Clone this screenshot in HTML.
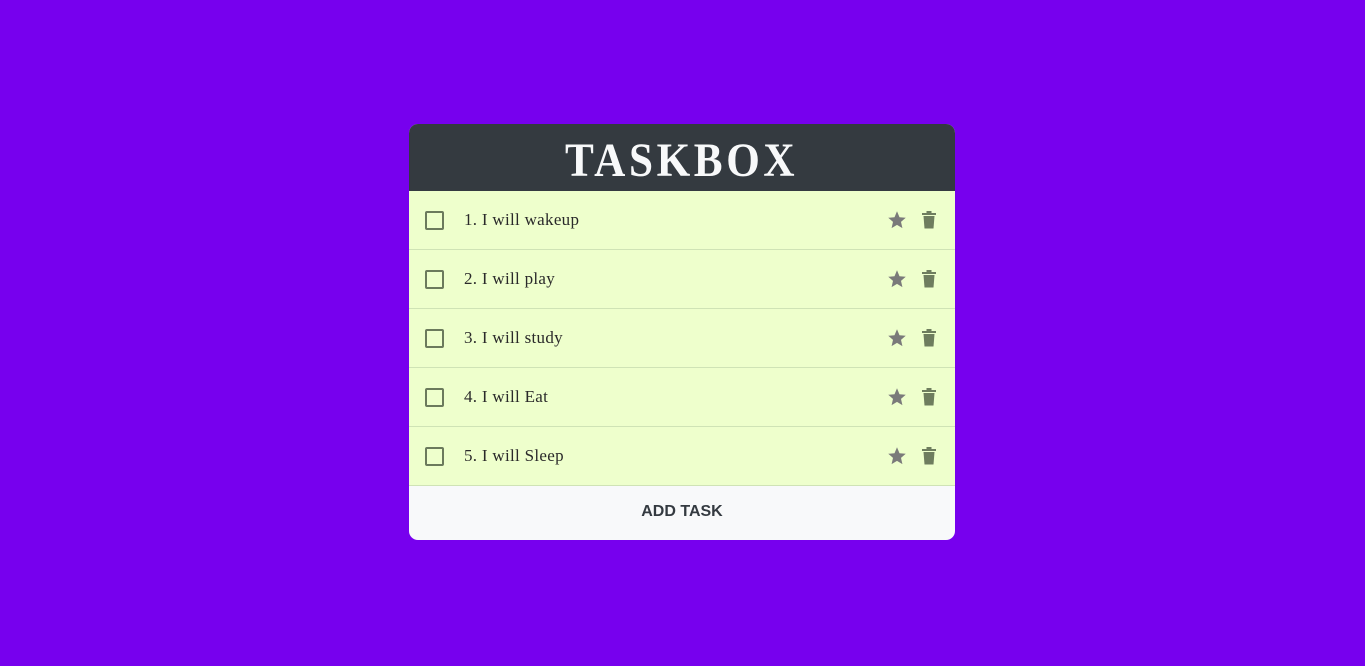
<!DOCTYPE html>
<html><head><meta charset="utf-8"><style>
html,body{margin:0;padding:0;}
body{width:1365px;height:666px;background:#7700ee;position:relative;overflow:hidden;}
.box{position:absolute;left:409px;top:124px;width:546px;height:416px;border-radius:9px;overflow:hidden;background:#f8f9fa;}
.hd{height:67px;background:#343a40;text-align:center;}
.hd span{display:inline-block;color:#f8f9fa;font-family:"Liberation Serif",serif;font-weight:bold;font-size:48px;letter-spacing:4px;line-height:67px;margin-top:3px;transform:scaleX(0.9);}
.row{height:58px;background:#eeffcc;border-bottom:1px solid #cfe3b5;position:relative;}
.cb{position:absolute;left:16px;top:20px;width:15px;height:15px;border:2px solid #6b7a5c;border-radius:2px;}
.tx{position:absolute;left:55px;top:0;line-height:58px;font-family:"Liberation Serif",serif;font-size:17px;color:#2a2a2a;letter-spacing:0.3px;}
.st{position:absolute;left:478px;top:19px;}
.tr{position:absolute;left:513px;top:20px;}
.ft{height:54px;line-height:52px;text-align:center;font-family:"Liberation Sans",sans-serif;font-weight:bold;font-size:16px;color:#343a40;}
</style></head><body>
<div class="box">
<div class="hd"><span>TASKBOX</span></div>
<div class="row"><div class="cb"></div><div class="tx">1. I will wakeup</div>
<svg class="st" width="20" height="20" viewBox="0 0 24 24"><path fill="#7a7a7a" d="M12 1.5l3 7.2 7.5.6-5.7 4.9 1.7 7.6L12 17.8 5.5 21.8l1.7-7.6L1.5 9.3l7.5-.6z"/></svg>
<svg class="tr" width="14" height="18" viewBox="0 0 14 18"><rect x="0" y="2" width="14" height="2" fill="#6e7d5e"/><rect x="4.5" y="0" width="5" height="2" fill="#6e7d5e"/><path d="M1.5 5h11l-1 12.5h-9z" fill="#6e7d5e"/></svg></div>
<div class="row"><div class="cb"></div><div class="tx">2. I will play</div>
<svg class="st" width="20" height="20" viewBox="0 0 24 24"><path fill="#7a7a7a" d="M12 1.5l3 7.2 7.5.6-5.7 4.9 1.7 7.6L12 17.8 5.5 21.8l1.7-7.6L1.5 9.3l7.5-.6z"/></svg>
<svg class="tr" width="14" height="18" viewBox="0 0 14 18"><rect x="0" y="2" width="14" height="2" fill="#6e7d5e"/><rect x="4.5" y="0" width="5" height="2" fill="#6e7d5e"/><path d="M1.5 5h11l-1 12.5h-9z" fill="#6e7d5e"/></svg></div>
<div class="row"><div class="cb"></div><div class="tx">3. I will study</div>
<svg class="st" width="20" height="20" viewBox="0 0 24 24"><path fill="#7a7a7a" d="M12 1.5l3 7.2 7.5.6-5.7 4.9 1.7 7.6L12 17.8 5.5 21.8l1.7-7.6L1.5 9.3l7.5-.6z"/></svg>
<svg class="tr" width="14" height="18" viewBox="0 0 14 18"><rect x="0" y="2" width="14" height="2" fill="#6e7d5e"/><rect x="4.5" y="0" width="5" height="2" fill="#6e7d5e"/><path d="M1.5 5h11l-1 12.5h-9z" fill="#6e7d5e"/></svg></div>
<div class="row"><div class="cb"></div><div class="tx">4. I will Eat</div>
<svg class="st" width="20" height="20" viewBox="0 0 24 24"><path fill="#7a7a7a" d="M12 1.5l3 7.2 7.5.6-5.7 4.9 1.7 7.6L12 17.8 5.5 21.8l1.7-7.6L1.5 9.3l7.5-.6z"/></svg>
<svg class="tr" width="14" height="18" viewBox="0 0 14 18"><rect x="0" y="2" width="14" height="2" fill="#6e7d5e"/><rect x="4.5" y="0" width="5" height="2" fill="#6e7d5e"/><path d="M1.5 5h11l-1 12.5h-9z" fill="#6e7d5e"/></svg></div>
<div class="row"><div class="cb"></div><div class="tx">5. I will Sleep</div>
<svg class="st" width="20" height="20" viewBox="0 0 24 24"><path fill="#7a7a7a" d="M12 1.5l3 7.2 7.5.6-5.7 4.9 1.7 7.6L12 17.8 5.5 21.8l1.7-7.6L1.5 9.3l7.5-.6z"/></svg>
<svg class="tr" width="14" height="18" viewBox="0 0 14 18"><rect x="0" y="2" width="14" height="2" fill="#6e7d5e"/><rect x="4.5" y="0" width="5" height="2" fill="#6e7d5e"/><path d="M1.5 5h11l-1 12.5h-9z" fill="#6e7d5e"/></svg></div>
<div class="ft">ADD TASK</div>
</div>
</body></html>
